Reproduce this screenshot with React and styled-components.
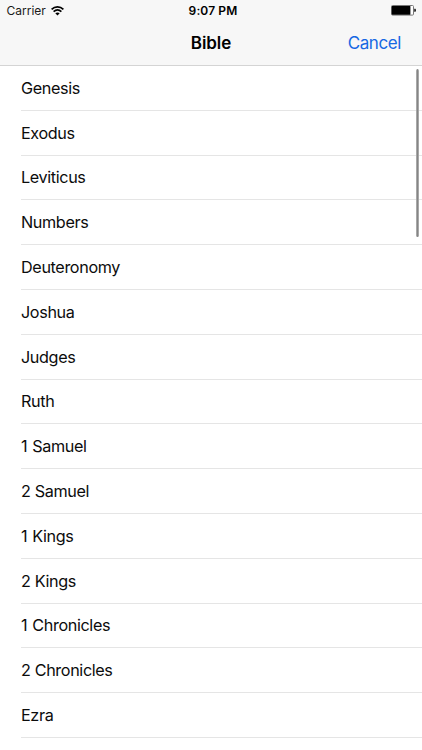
import React, { Component } from "react";
import styled, { createGlobalStyle } from "styled-components";

const books = [
  { name: "Genesis" },
  { name: "Exodus" },
  { name: "Leviticus" },
  { name: "Numbers" },
  { name: "Deuteronomy" },
  { name: "Joshua" },
  { name: "Judges" },
  { name: "Ruth" },
  { name: "1 Samuel", gap: 0.9 },
  { name: "2 Samuel" },
  { name: "1 Kings", gap: 0.9 },
  { name: "2 Kings" },
  { name: "1 Chronicles", gap: 0.9 },
  { name: "2 Chronicles" },
  { name: "Ezra" },
];

const WifiIcon = () => (
  <svg width="13" height="10" viewBox="0 0 13 10" fill="none" stroke="#000">
    <path d="M0.6 3.4C4 0 9 0 12.4 3.4" strokeWidth="1.7" />
    <path d="M2.6 5.7C5 3.4 8 3.4 10.4 5.7" strokeWidth="1.6" />
    <path d="M6.5 9.5L4.3 7.3C5.6 6.2 7.4 6.2 8.7 7.3Z" fill="#000" stroke="none" />
  </svg>
);

const BatteryIcon = () => (
  <svg width="25" height="11" viewBox="0 0 25 11">
    <rect x="0.5" y="0.5" width="22" height="9.6" rx="1" fill="#fff" stroke="#777" strokeWidth="1" />
    <rect x="0.8" y="0.9" width="18.6" height="8.8" rx="0.4" fill="#000" />
    <path d="M23.2 3.8H24.1C24.7 3.8 25 4.4 25 5.3S24.7 6.8 24.1 6.8H23.2Z" fill="#222" />
  </svg>
);

export default class App extends Component {
  render() {
    return (
      <Screen>
        <GlobalStyle />
        <Header>
          <StatusBar>
            <Carrier>
              Carrier <WifiIcon />
            </Carrier>
            <Time>9:07 PM</Time>
            <Battery>
              <BatteryIcon />
            </Battery>
          </StatusBar>
          <NavBar>
            <Title>Bible</Title>
            <Cancel>Cancel</Cancel>
          </NavBar>
        </Header>
        <List>
          {books.map(({ name, gap }) => (
            <Row key={name} $gap={gap}>{name}</Row>
          ))}
          <ScrollThumb />
        </List>
      </Screen>
    );
  }
}

const GlobalStyle = createGlobalStyle`
  body {
    margin: 0;
    background: #fff;
    overflow: hidden;
  }
`;

const Screen = styled.div`
  width: 422px;
  height: 750px;
  overflow: hidden;
  background: #fff;
  color: #000;
  font-family: Inter, "Liberation Sans", sans-serif;
`;

const Header = styled.div`
  box-sizing: border-box;
  height: 66px;
  background: #f7f7f7;
  border-bottom: 1px solid #d4d4d4;
`;

const StatusBar = styled.div`
  display: grid;
  grid-template-columns: 1fr auto 1fr;
  align-items: center;
  height: 21px;
  padding: 0 6px;
`;

const Carrier = styled.div`
  display: flex;
  align-items: center;
  gap: 5px;
  padding-left: 0.5px;
  font-size: 12px;
  line-height: 15px;
  color: #1a1a1a;
`;

const Time = styled.div`
  padding-left: 4px;
  font-size: 12px;
  line-height: 15px;
  font-weight: 600;
  letter-spacing: 0.12px;
`;

const Battery = styled.div`
  display: flex;
  justify-content: flex-end;
`;

const NavBar = styled.div`
  display: grid;
  grid-template-columns: 1fr auto 1fr;
  align-items: center;
  height: 43px;
  padding: 0 21px;
`;

const Title = styled.div`
  grid-column: 2;
  font-size: 17px;
  font-weight: 600;
  letter-spacing: -0.1px;
`;

const Cancel = styled.div`
  justify-self: end;
  font-size: 17px;
  letter-spacing: -0.4px;
  color: #1668e3;
`;

const List = styled.div`
  position: relative;
`;

const Row = styled.div`
  box-sizing: border-box;
  display: flex;
  align-items: center;
  height: 44.8px;
  margin-left: 21px;
  border-bottom: 1px solid #e5e5e5;
  font-size: 16.2px;
  letter-spacing: -0.37px;
  word-spacing: ${({ $gap }) => $gap || 0}px;
  color: #0c0c0c;
`;

const ScrollThumb = styled.div`
  position: absolute;
  top: 3px;
  right: 3px;
  width: 3px;
  height: 168px;
  border-radius: 1.5px;
  background: linear-gradient(to right, #a8a8a8 33%, #858585 33%, #858585 67%, #a8a8a8 67%);
`;
